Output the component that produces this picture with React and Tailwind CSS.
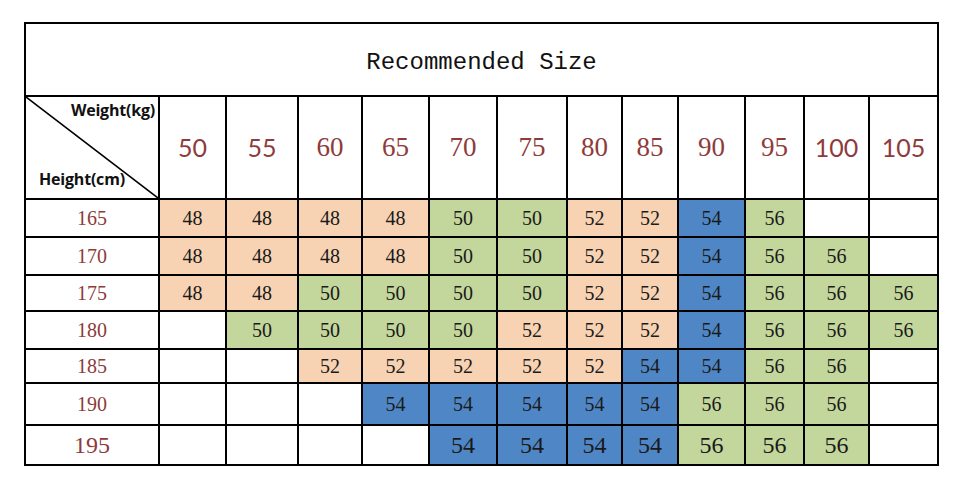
const weights = [
  { v: "50", sans: true },
  { v: "55", sans: true },
  { v: "60" },
  { v: "65" },
  { v: "70" },
  { v: "75" },
  { v: "80" },
  { v: "85" },
  { v: "90" },
  { v: "95" },
  { v: "100", sans: true },
  { v: "105", sans: true },
];

const widths = [134, 67, 72, 64, 67, 68, 70, 55, 56, 67, 59, 65, 69];

// O = peach, G = green, B = blue, "" = empty
const rows = [
  { h: "165", height: "h-[38px]", cells: ["48O", "48O", "48O", "48O", "50G", "50G", "52O", "52O", "54B", "56G", "", ""] },
  { h: "170", height: "h-[38px]", cells: ["48O", "48O", "48O", "48O", "50G", "50G", "52O", "52O", "54B", "56G", "56G", ""] },
  { h: "175", height: "h-[36px]", cells: ["48O", "48O", "50G", "50G", "50G", "50G", "52O", "52O", "54B", "56G", "56G", "56G"] },
  { h: "180", height: "h-[38px]", cells: ["", "50G", "50G", "50G", "50G", "52O", "52O", "52O", "54B", "56G", "56G", "56G"] },
  { h: "185", height: "h-[34px]", cells: ["", "", "52O", "52O", "52O", "52O", "52O", "54B", "54B", "56G", "56G", ""] },
  { h: "190", height: "h-[42px]", cells: ["", "", "", "54B", "54B", "54B", "54B", "54B", "56G", "56G", "56G", ""] },
  { h: "195", height: "h-[40px]", big: true, cells: ["", "", "", "", "54B", "54B", "54B", "54B", "56G", "56G", "56G", ""] },
];

const bg = {
  O: "bg-[#f8d3b3]",
  G: "bg-[#c3d69c]",
  B: "bg-[#4f86c6]",
};

export default function App() {
  return (
    <div className="w-[960px] h-[500px] bg-white pt-[22px] pl-[24px]">
      <table className="table-fixed border-collapse border-2 border-black w-[913px]">
        <colgroup>
          {widths.map((w, i) => (
            <col key={i} style={{ width: w }} />
          ))}
        </colgroup>
        <tbody>
          <tr className="h-[73px]">
            <td
              colSpan={13}
              className="border-2 border-black text-center pt-[6px] text-[24px] text-[#111] font-['Liberation_Mono',monospace]"
            >
              Recommended Size
            </td>
          </tr>
          <tr className="h-[103px]">
            <td className="relative border-2 border-black p-0 font-['Open_Sans',sans-serif] font-bold text-[16px] tracking-[-0.2px] text-[#111]">
              <svg className="absolute inset-0 w-full h-full" viewBox="0 0 100 100" preserveAspectRatio="none">
                <line x1="0" y1="0" x2="100" y2="100" stroke="#000" strokeWidth="1.6" vectorEffect="non-scaling-stroke" />
              </svg>
              <div className="flex flex-col h-[100px] justify-between pt-[2px] pb-[9px]">
                <span className="self-end pr-[3px] leading-[20px]">Weight(kg)</span>
                <span className="self-start pl-[13px] leading-[20px]">Height(cm)</span>
              </div>
            </td>
            {weights.map((w) => (
              <td
                key={w.v}
                className={`border-2 border-black text-center text-[#8e3b3b] ${
                  w.sans ? "text-[25px] font-['Lato',sans-serif]" : "text-[27px] font-['Liberation_Serif',serif]"
                }`}
              >
                {w.v}
              </td>
            ))}
          </tr>
          {rows.map((r) => (
            <tr key={r.h} className={r.height}>
              <td
                className={`border-2 border-black text-center text-[#8e3b3b] font-['Liberation_Serif',serif] ${
                  r.big ? "text-[24px]" : "text-[20px]"
                }`}
              >
                {r.h}
              </td>
              {r.cells.map((c, i) => (
                <td
                  key={i}
                  className={`border-2 border-black text-center text-[#1a1a1a] font-['Liberation_Serif',serif] ${
                    r.big ? "text-[24px]" : "text-[20px]"
                  } ${c ? bg[c[2]] : "bg-white"}`}
                >
                  {c.slice(0, 2)}
                </td>
              ))}
            </tr>
          ))}
        </tbody>
      </table>
    </div>
  );
}
